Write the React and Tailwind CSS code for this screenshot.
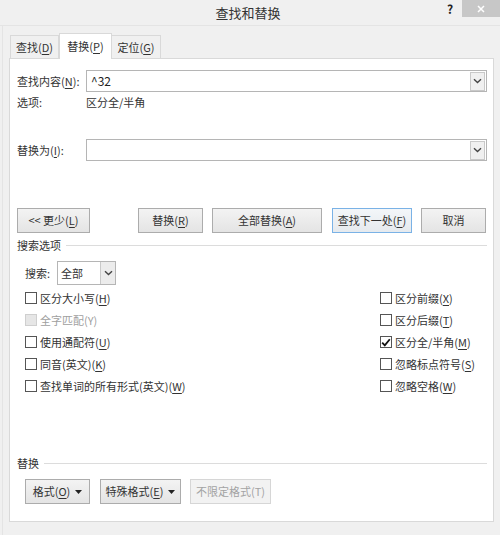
import React from 'react';

const font = { fontFamily: '"Microsoft YaHei UI", "Noto Sans CJK SC", "Noto Sans", sans-serif' };

function Key({ children }) {
    return <span className="underline underline-offset-2">{children}</span>;
}

function Chevron() {
    return (
        <svg width="9" height="6" viewBox="0 0 9 6" fill="none">
            <path d="M1 1.2 L4.5 4.5 L8 1.2" stroke="#444" strokeWidth="1.4" />
        </svg>
    );
}

function Caret() {
    return (
        <svg width="7" height="4" viewBox="0 0 7 4">
            <path d="M0 0 L7 0 L3.5 4 Z" fill="#222" />
        </svg>
    );
}

function ComboInput({ value }) {
    return (
        <div className="flex-1 h-[22px] border border-[#b5b5b5] bg-white flex items-center pl-[4px] pr-[1px]">
            <span className="flex-1 text-[12px] text-[#222]">{value}</span>
            <div className="w-[15px] h-[19px] border border-[#c9c9c9] bg-[#f0f0f0] flex items-center justify-center">
                <Chevron />
            </div>
        </div>
    );
}

function Button({ children, className = '', primary, disabled }) {
    let tone = 'border-[#acacac] bg-gradient-to-b from-[#f3f3f3] to-[#e4e4e4] text-[#333]';
    if (primary) tone = 'border-[#7ab2e6] bg-gradient-to-b from-[#f3f6f9] to-[#e6eaee] text-[#333]';
    if (disabled) tone = 'border-[#d6d6d6] bg-[#f2f2f2] text-[#a3a3a3]';
    return (
        <div className={`h-[25px] border flex items-center justify-center text-[11px] ${tone} ${className}`}>
            {children}
        </div>
    );
}

function Check({ label, checked, disabled }) {
    return (
        <div className="h-[22px] flex items-center">
            <div className={`w-[12px] h-[12px] border flex items-center justify-center ${disabled ? 'border-[#cfcfcf] bg-[#e6e6e6]' : 'border-[#555] bg-white'}`}>
                {checked && (
                    <svg width="10" height="9" viewBox="0 0 10 9">
                        <path d="M1.2 4.6 L3.8 7.3 L8.8 1.2" stroke="#111" strokeWidth="1.8" fill="none" />
                    </svg>
                )}
            </div>
            <span className={`ml-[3px] text-[11px] ${disabled ? 'text-[#a0a0a0]' : 'text-[#333]'}`}>{label}</span>
        </div>
    );
}

function Legend({ children }) {
    return (
        <div className="h-[14px] flex items-center">
            <span className="text-[11px] text-[#333] pr-[5px]">{children}</span>
            <div className="flex-1 h-px bg-[#dcdcdc]" />
        </div>
    );
}

export default function App() {
    return (
        <div className="w-[500px] h-[535px] bg-[#f0f0f0] overflow-hidden" style={font}>
            {/* title bar */}
            <div className="h-[26px] border-b border-[#e4e4e4] flex items-start">
                <div className="flex-1 h-[25px] flex items-center justify-center pl-[58px] text-[13px] text-[#333]">查找和替换</div>
                <div className="w-[24px] h-[18px] flex items-center justify-center text-[12px] font-bold text-[#222]">?</div>
                <div className="w-[38px] h-[17px] bg-[#c7c7c7] flex items-center justify-center">
                    <svg width="8" height="8" viewBox="0 0 8 8">
                        <path d="M1 1 L7 7 M7 1 L1 7" stroke="#fff" strokeWidth="1.5" />
                    </svg>
                </div>
            </div>

            <div className="flex h-[509px]">
                <div className="w-[3px] border-r border-[#e4e4e4]" />
                <div className="flex-1 flex flex-col pl-[6px] pr-[6px]">
                    {/* tabs */}
                    <div className="flex items-end h-[32px] pl-[1px]">
                        <div className="h-[23px] w-[49px] border border-b-0 border-[#d9d9d9] bg-[#f0f0f0] flex items-center justify-center text-[11px] text-[#333]">
                            查找(<Key>D</Key>)
                        </div>
                        <div className="h-[26px] w-[53px] border border-b-0 border-[#d9d9d9] bg-white flex items-center justify-center text-[11px] text-[#333] -mb-px relative z-10">
                            替换(<Key>P</Key>)
                        </div>
                        <div className="h-[23px] w-[49px] border border-b-0 border-l-0 border-[#d9d9d9] bg-[#f0f0f0] flex items-center justify-center text-[11px] text-[#333]">
                            定位(<Key>G</Key>)
                        </div>
                    </div>

                    {/* panel */}
                    <div className="h-[464px] bg-white border border-[#d9d9d9] pl-[7px] pr-[6px] flex flex-col">
                        <div className="mt-[11px] flex items-center">
                            <span className="w-[69px] text-[11px] text-[#333]">查找内容(<Key>N</Key>):</span>
                            <ComboInput value="^32" />
                        </div>
                        <div className="mt-[2px] h-[16px] flex items-center text-[11px] text-[#333]">
                            <span className="w-[69px]">选项:</span>
                            <span>区分全/半角</span>
                        </div>
                        <div className="mt-[29px] flex items-center">
                            <span className="w-[69px] text-[11px] text-[#333]">替换为(<Key>I</Key>):</span>
                            <ComboInput value="" />
                        </div>

                        <div className="mt-[47px] flex">
                            <Button className="w-[73px]">&lt;&lt; 更少(<Key>L</Key>)</Button>
                            <Button className="w-[65px] ml-[48px]">替换(<Key>R</Key>)</Button>
                            <Button className="w-[110px] ml-[9px]">全部替换(<Key>A</Key>)</Button>
                            <Button primary className="w-[80px] ml-[10px]">查找下一处(<Key>F</Key>)</Button>
                            <Button className="w-[65px] ml-[9px]">取消</Button>
                        </div>

                        <div className="mt-[5px]">
                            <Legend>搜索选项</Legend>
                        </div>

                        <div className="mt-[9px] pl-[8px] flex items-center">
                            <span className="w-[32px] text-[11px] text-[#333]">搜索:</span>
                            <div className="w-[59px] h-[24px] border border-[#b5b5b5] bg-white flex">
                                <span className="flex-1 flex items-center pl-[3px] text-[11px] text-[#333]">全部</span>
                                <div className="w-[15px] border-l border-[#c9c9c9] bg-[#ececec] flex items-center justify-center">
                                    <Chevron />
                                </div>
                            </div>
                        </div>

                        <div className="mt-[2px] pl-[8px] grid grid-cols-[355px_1fr]">
                            <div className="flex flex-col">
                                <Check label={<>区分大小写(<Key>H</Key>)</>} />
                                <Check disabled label="全字匹配(Y)" />
                                <Check label={<>使用通配符(<Key>U</Key>)</>} />
                                <Check label={<>同音(英文)(<Key>K</Key>)</>} />
                                <Check label={<>查找单词的所有形式(英文)(<Key>W</Key>)</>} />
                            </div>
                            <div className="flex flex-col">
                                <Check label={<>区分前缀(<Key>X</Key>)</>} />
                                <Check label={<>区分后缀(<Key>T</Key>)</>} />
                                <Check checked label={<>区分全/半角(<Key>M</Key>)</>} />
                                <Check label={<>忽略标点符号(<Key>S</Key>)</>} />
                                <Check label={<>忽略空格(<Key>W</Key>)</>} />
                            </div>
                        </div>

                        <div className="mt-[59px]">
                            <Legend>替换</Legend>
                        </div>

                        <div className="mt-[9px] pl-[8px] flex">
                            <Button className="w-[65px] gap-[5px]">
                                <span>格式(<Key>O</Key>)</span>
                                <Caret />
                            </Button>
                            <Button className="w-[81px] ml-[10px] gap-[5px]">
                                <span>特殊格式(<Key>E</Key>)</span>
                                <Caret />
                            </Button>
                            <Button disabled className="w-[81px] ml-[9px]">不限定格式(T)</Button>
                        </div>
                    </div>
                </div>
            </div>
        </div>
    );
}
